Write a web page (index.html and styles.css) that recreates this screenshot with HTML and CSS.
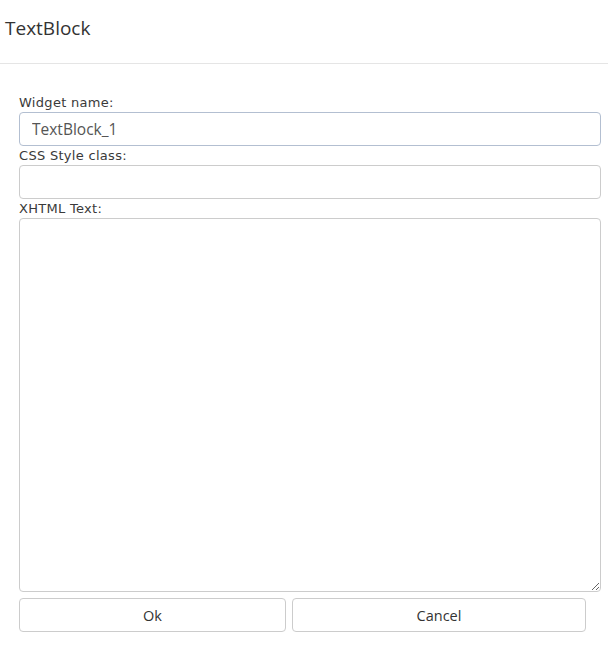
FILE: index.html
```html
<!DOCTYPE html>
<html>
<head>
<meta charset="utf-8">
<link rel="stylesheet" href="styles.css">
</head>
<body>
<div class="dialog">
  <div class="header"><span class="title">TextBlock</span></div>
  <div class="form">
    <label class="label" for="wname">Widget name:</label>
    <input class="field focused" id="wname" type="text" value="TextBlock_1">
    <label class="label" for="cssclass">CSS Style class:</label>
    <input class="field" id="cssclass" type="text" value="">
    <label class="label" for="xhtml">XHTML Text:</label>
    <textarea class="area" id="xhtml"></textarea>
    <div class="buttons">
      <button class="btn btn-ok" type="button">Ok</button>
      <button class="btn btn-cancel" type="button">Cancel</button>
    </div>
  </div>
</div>
</body>
</html>
```
FILE: styles.css
```css
html, body {
  margin: 0;
  padding: 0;
  background: #ffffff;
}
.dialog {
  width: 608px;
  height: 649px;
  font-family: "Open Sans", "Liberation Sans", sans-serif;
  color: #333333;
}
.header {
  box-sizing: border-box;
  height: 64px;
  border-bottom: 1px solid #e5e5e5;
  display: flex;
  align-items: center;
  padding-left: 5px;
  padding-bottom: 8px;
}
.title {
  font-size: 19px;
  color: #333333;
}
.form {
  display: flex;
  flex-direction: column;
  padding: 29px 0 0 19px;
}
.label {
  display: block;
  font-family: "DejaVu Sans", Verdana, sans-serif;
  font-size: 13px;
  letter-spacing: 0.3px;
  line-height: 19px;
  height: 19px;
  color: #3a3a3a;
}
.field {
  box-sizing: border-box;
  width: 582px;
  height: 34px;
  margin: 0;
  border: 1px solid #cccccc;
  border-radius: 4px;
  padding: 0 12px;
  font-family: "Open Sans", "Liberation Sans", sans-serif;
  font-size: 15.5px;
  color: #555555;
  background: #ffffff;
  outline: none;
}
.field.focused {
  border-color: #b3bfd1;
}
.area {
  box-sizing: border-box;
  width: 582px;
  height: 374px;
  margin: 0;
  border: 1px solid #cccccc;
  border-radius: 4px;
  padding: 6px 12px;
  font-family: "Open Sans", "Liberation Sans", sans-serif;
  font-size: 14px;
  color: #555555;
  background: #ffffff;
  outline: none;
  display: block;
}
.buttons {
  display: flex;
  gap: 6px;
  margin-top: 6px;
}
.btn {
  box-sizing: border-box;
  height: 34px;
  margin: 0;
  border: 1px solid #cccccc;
  border-radius: 4px;
  background: #ffffff;
  color: #333333;
  font-family: "Open Sans", "Liberation Sans", sans-serif;
  font-size: 14.5px;
  padding: 0;
}
.btn-ok {
  width: 267px;
}
.btn-cancel {
  width: 294px;
}
```
